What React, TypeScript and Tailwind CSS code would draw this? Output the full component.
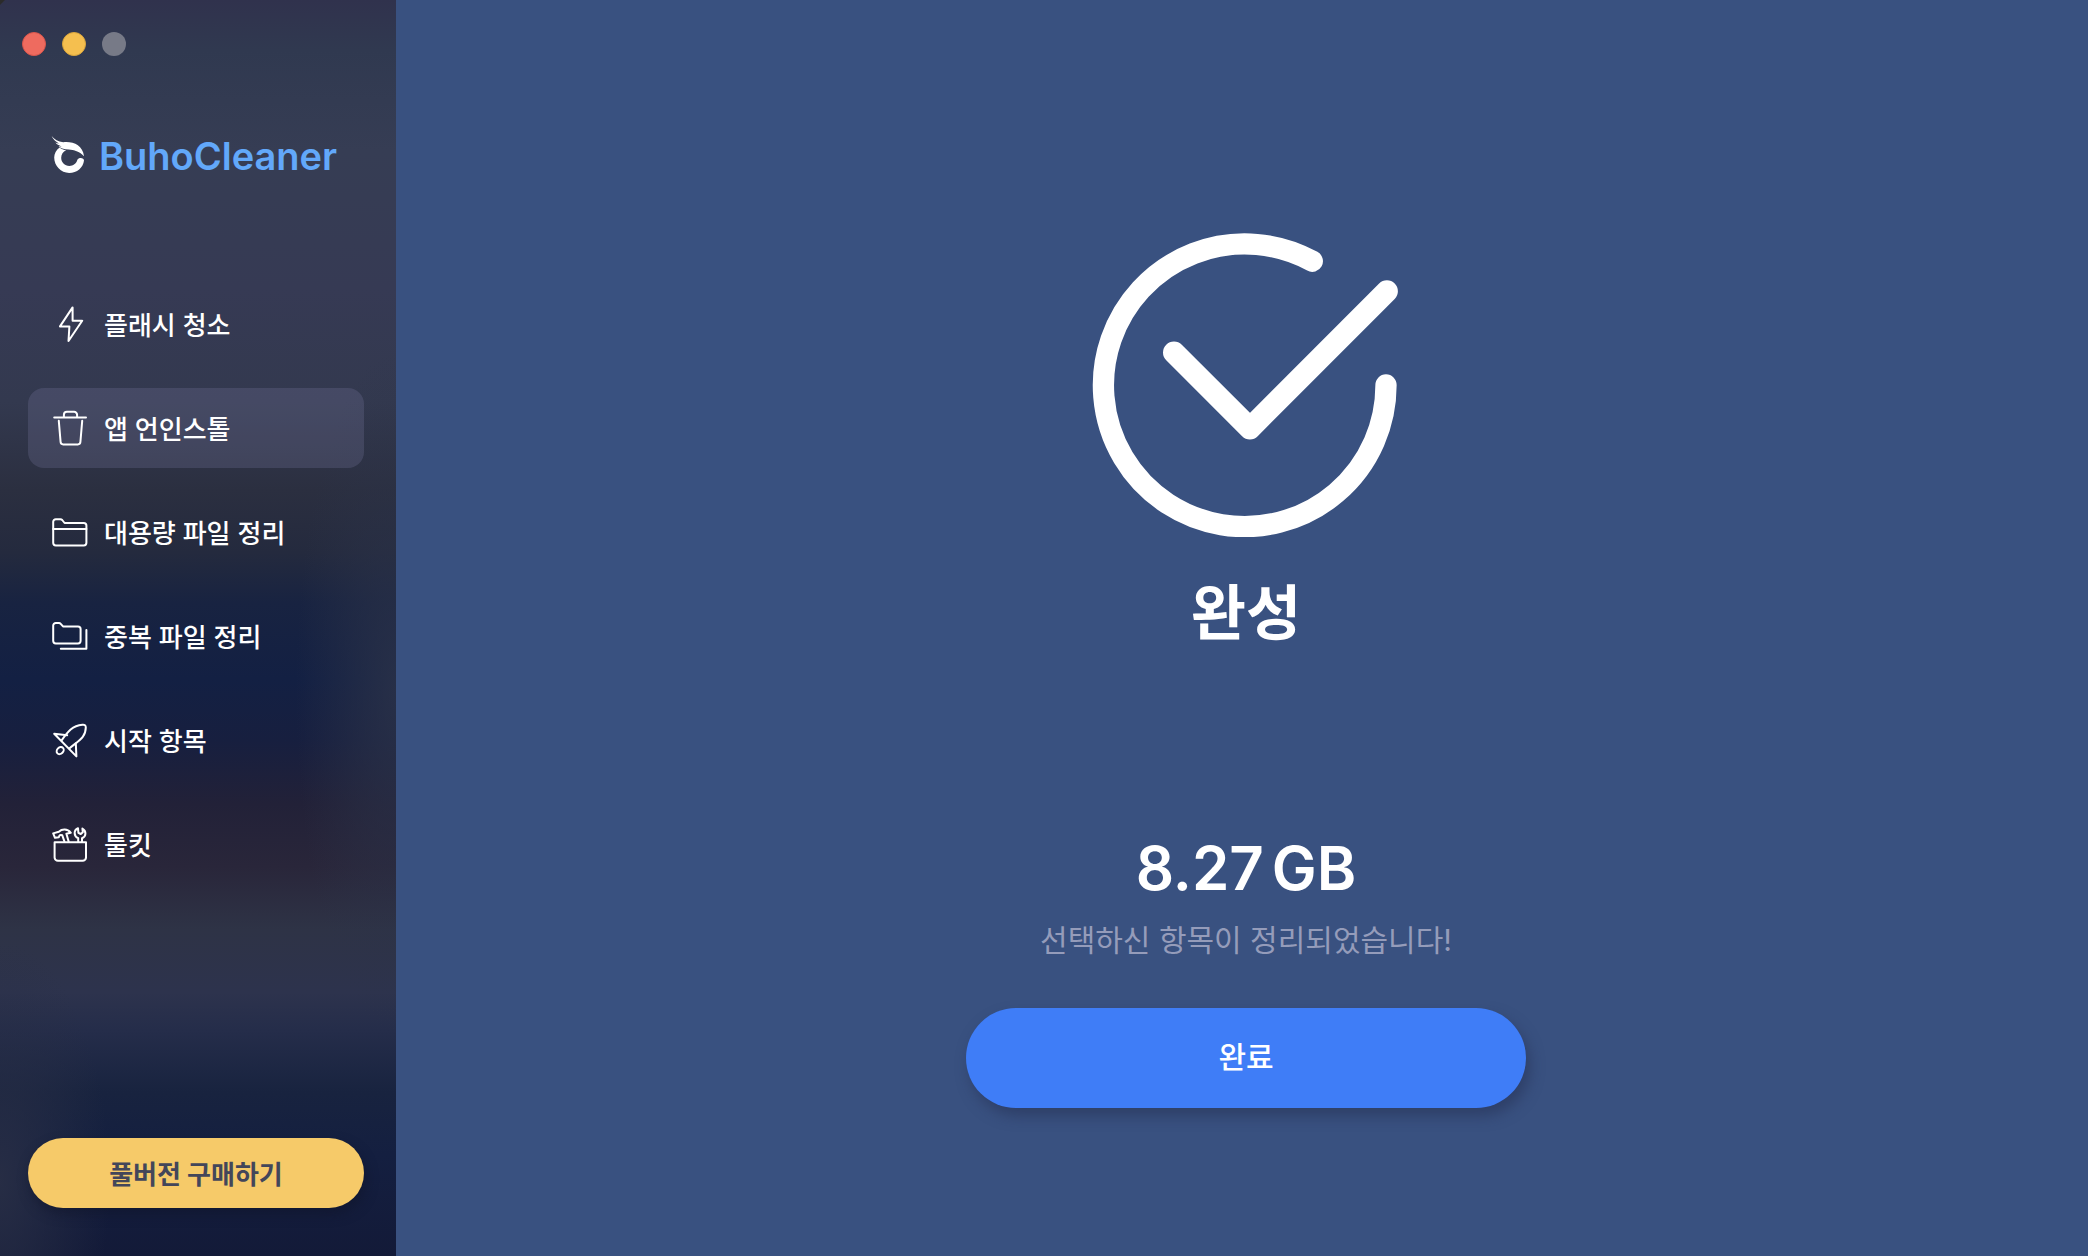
import React, { useState } from 'react';

interface IconProps {
  className?: string;
}

interface MenuItem {
  id: string;
  label: string;
  icon: React.ReactNode;
}

const IconBase = ({ children }: { children: React.ReactNode }) => (
  <svg viewBox="0 0 36 36" width={36} height={36} fill="none" stroke="currentColor" strokeWidth={2} strokeLinecap="round" strokeLinejoin="round" className="shrink-0" aria-hidden="true">
    {children}
  </svg>
);

const BoltIcon = () => (
  <IconBase>
    <path d="M20.6 1.4 8 20.4h9.4L16.5 35 30.2 14.8h-9.6z" />
  </IconBase>
);

const TrashIcon = () => (
  <IconBase>
    <path d="M2.2 7.6h31.8M11.9 7V4.8a3 3 0 0 1 3-3h7.2a3 3 0 0 1 3 3V7" />
    <path d="M6.8 10.8 8.6 32a2.6 2.6 0 0 0 2.6 2.4h14.6a2.6 2.6 0 0 0 2.6-2.4L30.2 10.8" />
  </IconBase>
);

const FolderIcon = () => (
  <IconBase>
    <path d="M1.2 8.8v-1a2.6 2.6 0 0 1 2.6-2.6h4.6a2.4 2.4 0 0 1 1.8.8l2.4 3h19.2a2.6 2.6 0 0 1 2.6 2.6v17.2a2.6 2.6 0 0 1-2.6 2.6h-28a2.6 2.6 0 0 1-2.6-2.6z" />
    <path d="M1.2 15h33.2" />
  </IconBase>
);

const FoldersIcon = () => (
  <IconBase>
    <path d="M1.2 8v-.4A2.6 2.6 0 0 1 3.8 5H7a2.4 2.4 0 0 1 1.7.8L11 8.4h15a2.6 2.6 0 0 1 2.6 2.6v11.8a2.6 2.6 0 0 1-2.6 2.6H3.8a2.6 2.6 0 0 1-2.6-2.6z" />
    <path d="M8.8 30.8h25.6V12" />
  </IconBase>
);

const RocketIcon = () => (
  <IconBase>
    <path d="M9.6 18.4C16 9.6 20.4 3.6 30.4 2.8c2.4-.2 3.4.4 3.4 2.6-.2 10-6.4 12.600-16.200 20.800" />
    <path d="M15.2 13.2 2.2 11.8 24.4 34.4 23.8 21.4" />
    <ellipse cx="8.2" cy="28.6" rx="3.9" ry="3.1" transform="rotate(-45 8.2 28.6)" />
  </IconBase>
);

const ToolkitIcon = () => (
  <IconBase>
    <path d="M2.6 16.2H34v15.2a3.4 3.4 0 0 1-3.4 3.4H6a3.4 3.4 0 0 1-3.4-3.4z" />
    <path d="M12.4 15.4 10.2 9.2C8.4 8.4 7.4 9.2 6.800 11.200L3 11.800 1.200 7.400l5.600-1.600c3-2.800 8.600-3.400 12 1l-4.400 1 2.200 7.600" />
    <path d="M26.200 15.400v-3.200c-4.600-2-4.800-8.200-.2-10l.4 4.600 2.400 1.200 2-1.800-.4-3.600c4.200 2.400 4 8-.4 9.600v3.200" />
  </IconBase>
);

const BuhoLogo = ({ className }: IconProps) => (
  <svg viewBox="0 0 36 40" width={36} height={40} fill="currentColor" className={className} aria-hidden="true">
    <path d="M.6 0c2.6 3.400 6.600 5.600 11.600 6.200 9.800-1 19.400 2.600 20.800 14-5-4.800-9.600-6.200-15.400-6.600C12.800 13.400 9 12.200 7.600 10c1 .4 2 .5 3 .4C7.800 9.600 5.600 8.400 4.400 6.600c1.200.6 2.400.9 3.600.9C4.800 5.800 2.400 3.600.6 0z" />
    <path d="M8.600 11.400C5.200 13.800 3.200 17.400 3.200 21.600 3.200 30 10 37 18.200 37c7.800 0 14-5.200 14.800-12.400.2-3-5.400-3.400-6.600-.8-1.200 4-4.200 6.200-8 6.200-4.800 0-8.200-3.600-8.200-8.200 0-3.400 1.800-6.200 5-7.600-2.400-.4-5.200-1.400-6.600-2.800z" />
  </svg>
);

const DoneIcon = ({ className }: IconProps) => (
  <svg viewBox="32 23 308 304" width={308} height={304} fill="none" stroke="currentColor" strokeLinecap="round" strokeLinejoin="round" className={className} aria-hidden="true">
    <path d="M252.3 51.2A141.3 141.3 0 1 0 326 175" strokeWidth={21.3} />
    <path d="M114 142.5 189.9 218.4 326.9 81.2" strokeWidth={22} />
  </svg>
);

const menuItems: MenuItem[] = [
  { id: 'flash', label: '플래시 청소', icon: <BoltIcon /> },
  { id: 'uninstall', label: '앱 언인스톨', icon: <TrashIcon /> },
  { id: 'large', label: '대용량 파일 정리', icon: <FolderIcon /> },
  { id: 'duplicate', label: '중복 파일 정리', icon: <FoldersIcon /> },
  { id: 'startup', label: '시작 항목', icon: <RocketIcon /> },
  { id: 'toolkit', label: '툴킷', icon: <ToolkitIcon /> },
];

export default function App() {
  const [active, setActive] = useState('uninstall');

  return (
    <div className="flex min-h-screen bg-[#395180] font-['Inter','Noto_Sans_CJK_KR',sans-serif] text-white">
      {/* Sidebar */}
      <aside className="flex w-[396px] shrink-0 flex-col bg-[linear-gradient(135deg,#2b2b2b_3px,#2b2b2b00_4px),radial-gradient(ellipse_100px_340px_at_100%_55%,#2c3349cc,#2c334900),radial-gradient(ellipse_110px_240px_at_0%_94%,#282e45ee,#282e4500),linear-gradient(180deg,#30324d_0%,#303950_4%,#363d54_12%,#363a54_23%,#33394f_32%,#2b2f40_39%,#242a3e_44%,#182341_48%,#132043_54%,#171f3f_59%,#222138_64%,#29263a_69%,#2e3346_74%,#2d334d_79%,#252d4a_82%,#18233f_87%,#141f40_92%,#131a38_100%)] pr-8 pb-12 pl-7">
        <div className="-ml-1.5 flex gap-4 pt-8">
          <button aria-label="닫기" className="size-6 rounded-full border border-[#d9564c] bg-[#ee6b5f]" />
          <button aria-label="최소화" className="size-6 rounded-full border border-[#dba63c] bg-[#f5bf4f]" />
          <button aria-label="확대" disabled className="size-6 rounded-full bg-[#777a87]" />
        </div>

        <div className="mt-[76px] flex h-12 items-center gap-3 pl-[23px]">
          <BuhoLogo className="shrink-0" />
          <span className="text-[38px] leading-12 font-semibold text-[#62a8fa]">BuhoCleaner</span>
        </div>

        <nav className="mt-[104px] flex flex-col gap-6">
          {menuItems.map((item) => (
            <button
              key={item.id}
              onClick={() => setActive(item.id)}
              className={`flex h-20 items-center gap-4 rounded-2xl pl-6 text-left text-[26px] font-medium ${active === item.id ? 'bg-[#7c7da5]/25' : ''}`}
            >
              {item.icon}
              <span className="pt-0.5">{item.label}</span>
            </button>
          ))}
        </nav>

        <button className="mt-auto h-[70px] rounded-full bg-[#f6ca69] pt-0.5 text-[26px] font-bold text-[#43465a] shadow-[2px_6px_12px_rgba(15,20,40,0.5)]">풀버전 구매하기</button>
      </aside>

      {/* Result */}
      <main className="flex flex-1 flex-col items-center pt-[233px] pl-2">
        <DoneIcon />
        <h1 className="mt-8 text-[60px] leading-[88px] font-bold">완성</h1>
        <p className="mt-[171px] flex gap-2 text-[60px] leading-20 font-semibold">
          <span>8.27</span>
          <span>GB</span>
        </p>
        <p className="mt-2 text-[30px] leading-12 text-[#959cba]">선택하신 항목이 정리되었습니다!</p>
        <button className="mt-11 h-[100px] w-[560px] rounded-full bg-[#3f7df7] pb-0.5 text-[30px] font-medium shadow-[4px_8px_14px_rgba(35,45,80,0.5)]">완료</button>
      </main>
    </div>
  );
}
